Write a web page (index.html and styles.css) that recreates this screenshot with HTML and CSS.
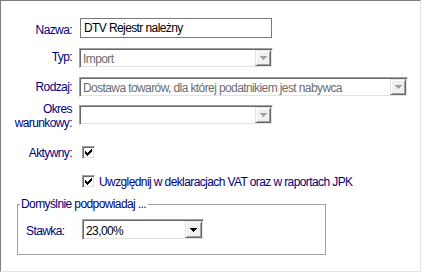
FILE: index.html
```html
<!DOCTYPE html>
<html>
<head>
<meta charset="utf-8">
<link rel="stylesheet" href="styles.css">
</head>
<body>
<div class="panel">
  <div class="row r-nazwa">
    <span class="lbl">Nazwa:</span>
    <div class="textbox">DTV Rejestr należny</div>
  </div>
  <div class="row r-typ">
    <span class="lbl">Typ:</span>
    <div class="combo w-short disabled">
      <span class="val">Import</span>
      <span class="btn"><svg width="7" height="4" viewBox="0 0 7 4"><path d="M0 0h7v1h-1v1h-1v1h-1v1h-1v-1h-1v-1h-1v-1h-1z" fill="#a0a0a0"/></svg></span>
    </div>
  </div>
  <div class="row r-rodzaj">
    <span class="lbl">Rodzaj:</span>
    <div class="combo w-long disabled">
      <span class="val">Dostawa towarów, dla której podatnikiem jest nabywca</span>
      <span class="btn"><svg width="7" height="4" viewBox="0 0 7 4"><path d="M0 0h7v1h-1v1h-1v1h-1v1h-1v-1h-1v-1h-1v-1h-1z" fill="#a0a0a0"/></svg></span>
    </div>
  </div>
  <div class="row r-okres">
    <span class="lbl">Okres<br>warunkowy:</span>
    <div class="combo w-short disabled">
      <span class="val"></span>
      <span class="btn"><svg width="7" height="4" viewBox="0 0 7 4"><path d="M0 0h7v1h-1v1h-1v1h-1v1h-1v-1h-1v-1h-1v-1h-1z" fill="#a0a0a0"/></svg></span>
    </div>
  </div>
  <div class="row r-akt">
    <span class="lbl">Aktywny:</span>
    <span class="chk"><svg width="13" height="13" viewBox="0 0 13 13" shape-rendering="crispEdges"><path d="M3 5V8H4V9H5V10H6V9H7V8H8V7H9V6H10V3H9V4H8V5H7V6H6V7H5V6H4V5Z" fill="#000"/></svg></span>
  </div>
  <div class="row r-uwz">
    <span class="lbl"></span>
    <span class="chk"><svg width="13" height="13" viewBox="0 0 13 13" shape-rendering="crispEdges"><path d="M3 5V8H4V9H5V10H6V9H7V8H8V7H9V6H10V3H9V4H8V5H7V6H6V7H5V6H4V5Z" fill="#000"/></svg></span>
    <span class="chk-text">Uwzględnij w deklaracjach VAT oraz w raportach JPK</span>
  </div>
  <fieldset class="group">
    <legend>Domyślnie podpowiadaj ...</legend>
    <div class="group-body">
      <div class="row r-stawka">
        <span class="lbl-left">Stawka:</span>
        <div class="combo w-stawka enabled">
          <span class="val">23,00%</span>
          <span class="btn"><svg width="7" height="4" viewBox="0 0 7 4"><path d="M0 0h7v1h-1v1h-1v1h-1v1h-1v-1h-1v-1h-1v-1h-1z" fill="#000"/></svg></span>
        </div>
      </div>
    </div>
  </fieldset>
</div>
</body>
</html>
```

FILE: styles.css
```css
html, body {
  margin: 0;
  background: #fff;
}
body {
  font: 12px/14px "Liberation Sans", Arial, sans-serif;
  letter-spacing: -0.6px;
  color: #000;
}
.panel {
  width: 421px;
  height: 272px;
  box-sizing: border-box;
  border-top: 1px solid #808080;
  border-left: 1px solid #808080;
  border-right: 1px solid #e3e3e3;
  border-bottom: 1px solid #e3e3e3;
  padding-top: 17px;
}
.row {
  display: flex;
  align-items: flex-start;
}
.lbl {
  flex: none;
  width: 71px;
  margin-right: 7px;
  text-align: right;
  color: #000080;
}
.textbox {
  margin-left: 1px;
  width: 192px;
  height: 20px;
  box-sizing: border-box;
  border: 1px solid #7a7a7a;
  padding: 2px 3px;
  white-space: nowrap;
  overflow: hidden;
}
.r-nazwa .lbl { padding-top: 5px; }
.r-typ { margin-top: 10px; }
.r-typ .lbl { padding-top: 2px; }
.r-rodzaj { margin-top: 9px; }
.r-rodzaj .lbl { padding-top: 3px; }
.r-okres { margin-top: 8px; }
.r-okres .lbl { margin-top: -3px; }
.r-akt { margin-top: 16px; }
.r-uwz { margin-top: 15px; }

.combo {
  display: flex;
  height: 20px;
  box-sizing: border-box;
  border: 1px solid;
  border-color: #a0a0a0 #fff #fff #a0a0a0;
  box-shadow: inset 1px 1px #696969, inset -1px -1px #e3e3e3;
  padding: 1px;
  background: #fff;
}
.w-short { width: 194px; }
.w-long { width: 329px; }
.w-stawka { width: 122px; height: 21px; }
.val {
  flex: 1;
  min-width: 0;
  padding: 2px 0 0 2px;
  white-space: nowrap;
  overflow: hidden;
}
.disabled .val { color: #6d6d6d; }
.btn {
  flex: none;
  width: 16px;
  height: 16px;
  box-sizing: border-box;
  background: #f0f0f0;
  border: 1px solid;
  border-color: #e3e3e3 #696969 #696969 #e3e3e3;
  box-shadow: inset 1px 1px #fff, inset -1px -1px #a0a0a0;
  display: flex;
  align-items: center;
  justify-content: center;
}
.btn svg { display: block; }
.enabled .val { padding-top: 3px; }
.enabled .btn { width: 17px; height: 17px; }

.chk {
  flex: none;
  width: 13px;
  height: 13px;
  margin-left: 3px;
  box-sizing: border-box;
  border: 1px solid;
  border-color: #a0a0a0 #fff #fff #a0a0a0;
  box-shadow: inset 1px 1px #696969, inset -1px -1px #e3e3e3;
  background: #fff;
}
.chk svg {
  display: block;
  margin: -1px 0 0 -1px;
}
.chk-text {
  margin-left: 4px;
  color: #000080;
  white-space: nowrap;
}

.group {
  margin: 8px 0 0 16px;
  padding: 0;
  width: 309px;
  box-sizing: border-box;
  border: 1px solid #a0a0a0;
  min-inline-size: 0;
}
.group legend {
  margin-left: 2px;
  padding: 0 2px 0 1px;
  color: #000080;
  line-height: 14px;
}
.group-body {
  padding: 8px 0 14px 8px;
}
.lbl-left {
  flex: none;
  width: 56px;
  padding-top: 5px;
  color: #000080;
}
```
